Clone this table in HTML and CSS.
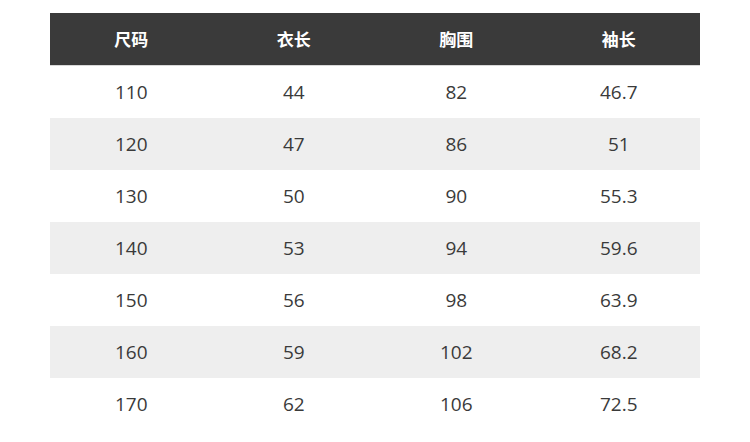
FILE: index.html
```html
<!DOCTYPE html>
<html lang="zh">
<head>
<meta charset="utf-8">
<link rel="stylesheet" href="styles.css">
</head>
<body>
<table class="size-table">
  <thead>
    <tr><th>尺码</th><th>衣长</th><th>胸围</th><th>袖长</th></tr>
  </thead>
  <tbody>
    <tr><td>110</td><td>44</td><td>82</td><td>46.7</td></tr>
    <tr><td>120</td><td>47</td><td>86</td><td>51</td></tr>
    <tr><td>130</td><td>50</td><td>90</td><td>55.3</td></tr>
    <tr><td>140</td><td>53</td><td>94</td><td>59.6</td></tr>
    <tr><td>150</td><td>56</td><td>98</td><td>63.9</td></tr>
    <tr><td>160</td><td>59</td><td>102</td><td>68.2</td></tr>
    <tr><td>170</td><td>62</td><td>106</td><td>72.5</td></tr>
  </tbody>
</table>
</body>
</html>
```
FILE: styles.css
```css
html, body {
  margin: 0;
  padding: 0;
  background: #ffffff;
}
body {
  padding: 13px 50px 0;
  font-family: "Open Sans", "Noto Sans CJK SC", sans-serif;
}
.size-table {
  width: 650px;
  border-collapse: collapse;
  table-layout: fixed;
}
.size-table th {
  height: 52px;
  padding: 0;
  background: #3a3a3a;
  color: #ffffff;
  font-family: "Noto Sans CJK SC", sans-serif;
  font-weight: 700;
  font-size: 17px;
  text-align: center;
  border-bottom: 1px solid #d8d8d8;
  box-sizing: border-box;
}
.size-table td {
  height: 52px;
  padding: 0;
  color: #3a3a3a;
  font-size: 19px;
  text-align: center;
}
.size-table tbody tr:nth-child(even) td {
  background: #eeeeee;
}
```
